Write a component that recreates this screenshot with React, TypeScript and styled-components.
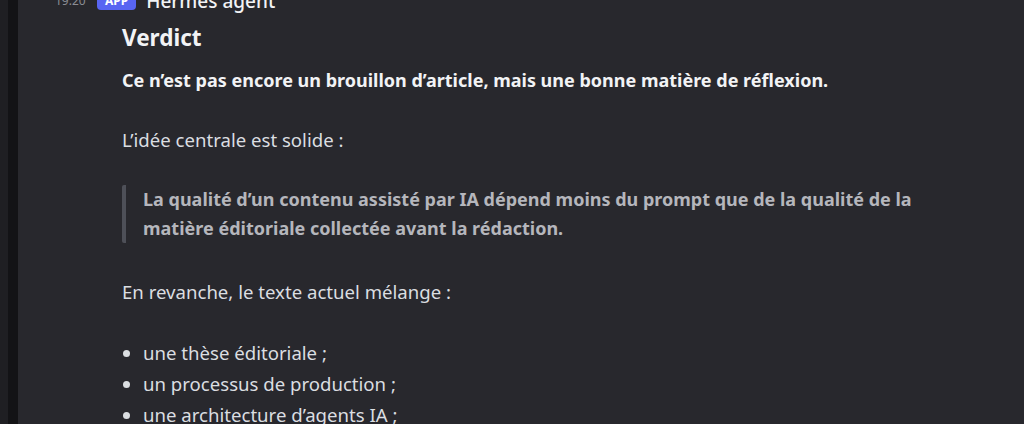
import React from "react";
import styled, {createGlobalStyle} from "styled-components";

const Global = createGlobalStyle`
  html, body {
    margin: 0;
    padding: 0;
    background: #28282d;
  }
  body {
    font-family: "Noto Sans", "Open Sans", sans-serif;
    overflow: hidden;
  }
`

const Page = styled.div`
  display: flex;
  width: 1024px;
  height: 424px;
  overflow: hidden;
  background: #28282d;
`

const Rail = styled.div`
  width: 8px;
  flex: none;
  background: #1f1f23;
`

const Gutter = styled.div`
  width: 10px;
  flex: none;
  background: #131316;
`

const Chat = styled.div`
  flex: 1;
  padding-left: 37px;
  padding-right: 60px;
  color: #dbdee1;
  font-size: 18px;
  line-height: 30px;
`

const Header = styled.div`
  display: flex;
  align-items: center;
  height: 28px;
  margin-top: -13px;
  gap: 10px;
`

const Time = styled.span`
  width: 32px;
  font-size: 12px;
  color: #8a8c93;
`

const Badge = styled.span`
  background: #5865f2;
  color: #fff;
  font-size: 12px;
  font-weight: 700;
  line-height: 18px;
  padding: 0 8px;
  border-radius: 4px;
`

const Author = styled.span`
  font-size: 19px;
  font-weight: 500;
  color: #f2f3f5;
`

const Body = styled.div`
  padding-left: 67px;
`

const Title = styled.h3`
  margin: 0 0 11px;
  padding-top: 7px;
  font-size: 22.5px;
  line-height: 32px;
  font-weight: 700;
  color: #f2f3f5;
`

const Para = styled.p<{$strong?: boolean}>`
  margin: 0 0 30px;
  font-weight: ${p => p.$strong ? 700 : 400};
  font-size: ${p => p.$strong ? "18px" : "18.6px"};
  color: ${p => p.$strong ? "#f2f3f5" : "#dbdee1"};
`

const Quote = styled.blockquote`
  margin: 0 0 34px;
  padding: 0 0 0 17px;
  border-left: 4px solid #4e5058;
  border-radius: 2px;
  font-weight: 700;
  line-height: 29px;
  color: #b5b6bc;
`

const List = styled.ul`
  margin: 0;
  padding-left: 21px;
  font-size: 18.6px;
  li {
    line-height: 31px;
  }
`

export default function App() {
  return <Page>
    <Global/>
    <Rail/>
    <Gutter/>
    <Chat>
      <Header>
        <Time>19:20</Time>
        <Badge>APP</Badge>
        <Author>Hermes agent</Author>
      </Header>
      <Body>
        <Title>Verdict</Title>
        <Para $strong>Ce n’est pas encore un brouillon d’article, mais une bonne matière de réflexion.</Para>
        <Para>L’idée centrale est solide :</Para>
        <Quote>
          La qualité d’un contenu assisté par IA dépend moins du prompt que de la qualité de la
          matière éditoriale collectée avant la rédaction.
        </Quote>
        <Para>En revanche, le texte actuel mélange :</Para>
        <List>
          <li>une thèse éditoriale ;</li>
          <li>un processus de production ;</li>
          <li>une architecture d’agents IA ;</li>
        </List>
      </Body>
    </Chat>
  </Page>
}
